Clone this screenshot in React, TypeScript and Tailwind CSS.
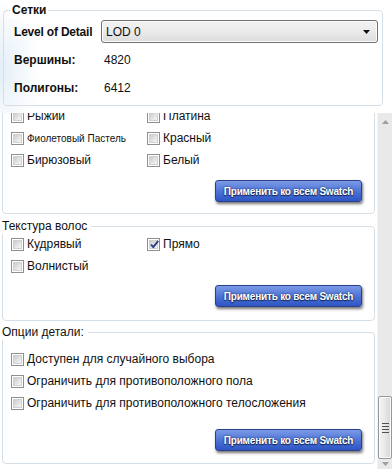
import React from "react";

function Box({ checked }: { checked?: boolean }) {
  return (
    <span className="relative w-[13px] h-[13px] shrink-0 border border-[#8e8f8f] bg-white p-[1px] flex">
      <span className="flex-1 border border-[#d0d0d0] bg-gradient-to-br from-[#cbcbcb] to-[#f7f7f7]" />
      {checked && (
        <svg className="absolute left-[1px] top-[0px]" width="11" height="11" viewBox="0 0 11 11">
          <path d="M2 5.5 L4.3 8.2 L9.2 1.8" fill="none" stroke="#2a3f8f" strokeWidth="1.9" strokeLinejoin="round" />
        </svg>
      )}
    </span>
  );
}

function Check({ label, checked, small }: { label: string; checked?: boolean; small?: boolean }) {
  return (
    <div className="h-[22px] flex items-center gap-[3px]">
      <Box checked={checked} />
      <span className={small ? "text-[10px] text-[#111]" : "text-[12px] text-[#111]"}>{label}</span>
    </div>
  );
}

function ApplyButton() {
  return (
    <div className="flex justify-end">
      <button className="w-[147px] h-[22px] rounded-[3px] border border-[#2c408c] bg-gradient-to-b from-[#7c9be6] via-[#4f74d6] to-[#2d55c5] text-white text-[10px] font-bold tracking-[-0.2px] shadow-[1px_2px_3px_rgba(0,0,0,0.55)] [text-shadow:0_0_2px_#14234f,0_1px_1px_#14234f]">
        Применить ко всем Swatch
      </button>
    </div>
  );
}

export default function App() {
  return (
    <div className="w-[392px] h-[469px] bg-white overflow-hidden flex flex-col font-['Liberation_Sans',Arial,sans-serif] text-[12px] text-[#111]">
      {/* Header: Сетки */}
      <div className="h-[113px] shrink-0 pt-[10px] pl-[3px] pr-[9px] bg-[radial-gradient(ellipse_40px_70px_at_0px_70px,#e3eef8_0%,#ffffff_100%)]">
        <div className="relative h-[96px] border border-[#d5dfe5] rounded-[4px] pl-[10px] pr-[4px] pt-[9px]">
          <span className="absolute -top-[9px] left-[6px] bg-white px-[2px] font-bold leading-[16px]">Сетки</span>
          <div className="h-[23px] flex items-center">
            <span className="w-[87px] font-bold tracking-[-0.2px]">Level of Detail</span>
            <div className="flex-1 h-[23px] rounded-[3px] border border-[#707070] bg-gradient-to-b from-[#f2f2f2] via-[#ebebeb] to-[#dcdcdc] flex items-center pl-[4px] pr-[7px] shadow-[inset_0_0_0_1px_#fcfcfc]">
              <span className="flex-1">LOD 0</span>
              <svg width="7" height="4" viewBox="0 0 7 4">
                <path d="M0 0 H7 L3.5 4 Z" fill="#111" />
              </svg>
            </div>
          </div>
          <div className="mt-[3px] h-[28px] flex items-center">
            <span className="w-[90px] font-bold">Вершины:</span>
            <span>4820</span>
          </div>
          <div className="h-[28px] flex items-center">
            <span className="w-[90px] font-bold">Полигоны:</span>
            <span>6412</span>
          </div>
        </div>
      </div>

      {/* Scroll area */}
      <div className="flex-1 min-h-0 flex">
        <div className="flex-1 overflow-hidden pl-[2px] pr-[2px]">
          <div className="-mt-[20px]">
            {/* Group 1 (colours) */}
            <div className="border border-[#d5dfe5] rounded-[4px] pt-[11px] pb-[11px] pl-[8px] pr-[12px]">
              <div className="grid grid-cols-[136px_1fr]">
                <Check label="Рыжий" />
                <Check label="Платина" />
                <Check label="Фиолетовый Пастель" small />
                <Check label="Красный" />
                <Check label="Бирюзовый" />
                <Check label="Белый" />
              </div>
              <div className="mt-[9px]">
                <ApplyButton />
              </div>
            </div>

            {/* Group 2 */}
            <div className="relative mt-[12px] border border-[#d5dfe5] rounded-[4px] pt-[6px] pb-[13px] pl-[8px] pr-[12px]">
              <span className="absolute -top-[9px] -left-[1px] bg-white pr-[4px] leading-[16px]">Текстура волос</span>
              <div className="grid grid-cols-[136px_1fr]">
                <Check label="Кудрявый" />
                <Check label="Прямо" checked />
                <Check label="Волнистый" />
              </div>
              <div className="mt-[8px]">
                <ApplyButton />
              </div>
            </div>

            {/* Group 3 */}
            <div className="relative mt-[11px] border border-[#d5dfe5] rounded-[4px] pt-[15px] pb-[12px] pl-[8px] pr-[12px]">
              <span className="absolute -top-[9px] -left-[1px] bg-white pr-[4px] leading-[16px]">Опции детали:</span>
              <Check label="Доступен для случайного выбора" />
              <Check label="Ограничить для противоположного пола" />
              <Check label="Ограничить для противоположного телосложения" />
              <div className="mt-[15px]">
                <ApplyButton />
              </div>
            </div>
          </div>
        </div>

        {/* Scrollbar */}
        <div className="w-[15px] shrink-0 bg-[#e9e9e9] border-l border-[#f2f2f2] flex flex-col">
          <div className="h-[18px] flex items-center justify-center">
            <svg width="7" height="4" viewBox="0 0 7 4">
              <path d="M0 4 H7 L3.5 0 Z" fill="#a0a0a0" />
            </svg>
          </div>
          <div className="flex-1 flex flex-col justify-end">
            <div className="h-[63px] rounded-[2px] border border-[#979797] bg-gradient-to-r from-[#f4f4f4] via-[#e8e8e8] to-[#d6d6d6] shadow-[inset_0_0_0_1px_#fafafa] flex flex-col items-center justify-center gap-[2px]">
              <span className="w-[7px] h-[1px] bg-[#505050]" />
              <span className="w-[7px] h-[1px] bg-[#505050]" />
              <span className="w-[7px] h-[1px] bg-[#505050]" />
              <span className="w-[7px] h-[1px] bg-[#505050]" />
            </div>
          </div>
          <div className="h-[10px] flex items-center justify-center">
            <svg width="7" height="4" viewBox="0 0 7 4">
              <path d="M0 0 H7 L3.5 4 Z" fill="#a0a0a0" />
            </svg>
          </div>
        </div>
      </div>
    </div>
  );
}
